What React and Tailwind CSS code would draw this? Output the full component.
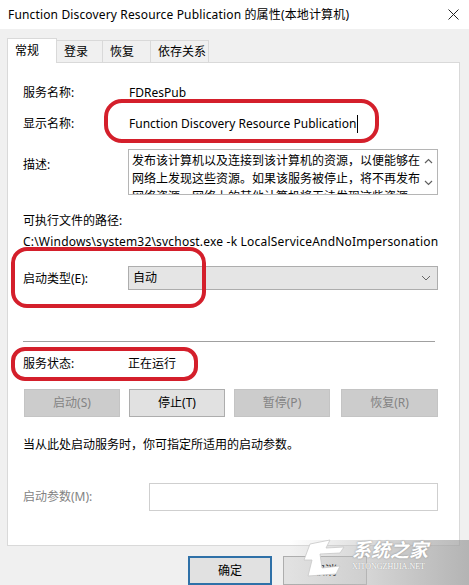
import React from "react";

const font = "font-['Noto_Sans','Noto_Sans_CJK_SC',sans-serif]";

function Label({ children, muted }) {
  return (
    <div className={`w-[105px] shrink-0 leading-[17px] ${muted ? "text-[#838383]" : "text-black"}`}>
      {children}
    </div>
  );
}

function Btn({ children, disabled }) {
  return (
    <div
      className={`h-[28px] w-[97px] flex items-center justify-center border ${
        disabled
          ? "bg-[#cccccc] border-[#c4c4c4] text-[#838383]"
          : "bg-[#e1e1e1] border-[#adadad] text-black"
      }`}
    >
      {children}
    </div>
  );
}

function Chevron({ up }) {
  return (
    <svg width="9" height="6" viewBox="0 0 9 6">
      <path
        d={up ? "M1 5 L4.5 1.5 L8 5" : "M1 1 L4.5 4.5 L8 1"}
        fill="none"
        stroke="#606060"
        strokeWidth="1.2"
      />
    </svg>
  );
}

const tabs = [
  { name: "常规", w: "w-[50px]", active: true },
  { name: "登录", w: "w-[46px]" },
  { name: "恢复", w: "w-[48px]" },
  { name: "依存关系", w: "w-[58px]" },
];

export default function App() {
  return (
    <div className={`relative w-[469px] h-[585px] overflow-hidden bg-[#f0f0f0] text-[12px] ${font}`}>
      {/* title bar */}
      <div className="h-[29px] bg-white flex items-center justify-between pl-[8px] pr-[10px]">
        <span className="text-black tracking-[0.15px]">
          Function Discovery Resource Publication 的属性(本地计算机)
        </span>
        <svg width="11" height="11" viewBox="0 0 11 11">
          <path d="M0.5 0.5 L10.5 10.5 M10.5 0.5 L0.5 10.5" stroke="#222" strokeWidth="1" />
        </svg>
      </div>

      {/* tabs */}
      <div className="mt-[9px] ml-[7px] flex items-end h-[24px]">
        {tabs.map((t) => (
          <div
            key={t.name}
            className={`${t.w} flex items-center pl-[7px] border-t border-l border-r border-[#d9d9d9] ${
              t.active ? "h-[25px] bg-white relative z-10 -mb-px" : "h-[22px] bg-[#f0f0f0] border-l-0"
            }`}
          >
            {t.name}
          </div>
        ))}
      </div>

      {/* panel */}
      <div className="ml-[7px] w-[453px] h-[484px] bg-white border border-[#d9d9d9] pl-[15px] pr-[21px]">
        <div className="mt-[21px] h-[17px] flex items-center">
          <Label>服务名称:</Label>
          <span className="ml-[1px]">FDResPub</span>
        </div>
        <div className="mt-[14px] h-[17px] flex items-center">
          <Label>显示名称:</Label>
          <span className="ml-[1px] border-r border-black pr-[1px]">Function Discovery Resource Publication</span>
        </div>
        <div className="mt-[17px] flex items-start">
          <div className="pt-[7px]">
            <Label>描述:</Label>
          </div>
          <div className="relative w-[311px] h-[46px] border border-[#b5b5b5] overflow-hidden">
            <div className="pl-[3px] pt-[2px] leading-[18px] whitespace-nowrap">
              <div>发布该计算机以及连接到该计算机的资源，以便能够在</div>
              <div>网络上发现这些资源。如果该服务被停止，将不再发布</div>
              <div>网络资源。网络上的其他计算机将无法发现这些资源</div>
            </div>
            <div className="absolute right-0 top-0 bottom-0 w-[17px] bg-white flex flex-col items-center justify-between py-[8px]">
              <Chevron up />
              <Chevron />
            </div>
          </div>
        </div>
        <div className="mt-[17px] h-[17px] flex items-center">可执行文件的路径:</div>
        <div className="mt-[4px] h-[17px] flex items-center whitespace-nowrap tracking-[0.2px]">
          C:\Windows\system32\svchost.exe -k LocalServiceAndNoImpersonation
        </div>
        <div className="mt-[16px] flex items-center">
          <Label>启动类型(E):</Label>
          <div className="w-[311px] h-[24px] bg-[#e5e5e5] border border-[#adadad] flex items-center justify-between pl-[4px] pr-[6px]">
            <span>自动</span>
            <svg width="10" height="6" viewBox="0 0 10 6">
              <path d="M1 1 L5 5 L9 1" fill="none" stroke="#666" strokeWidth="1" />
            </svg>
          </div>
        </div>
        <div className="mt-[51px] h-px w-[412px] bg-[#a0a0a0]" />
        <div className="mt-[13px] h-[17px] flex items-center">
          <Label>服务状态:</Label>
          <span>正在运行</span>
        </div>
        <div className="mt-[17px] flex gap-[9px] ml-[1px]">
          <Btn disabled>启动(S)</Btn>
          <Btn>停止(T)</Btn>
          <Btn disabled>暂停(P)</Btn>
          <div className="ml-[2px]">
            <Btn disabled>恢复(R)</Btn>
          </div>
        </div>
        <div className="mt-[19px] h-[17px] flex items-center">当从此处启动服务时，你可指定所适用的启动参数。</div>
        <div className="mt-[30px] flex items-center">
          <div className="w-[126px] shrink-0 text-[#838383]">启动参数(M):</div>
          <div className="w-[290px] h-[28px] border border-[#cfcfcf] bg-white" />
        </div>
      </div>

      {/* dialog buttons */}
      <div className="mt-[10px] ml-[188px] flex gap-[11px]">
        <div className="w-[84px] h-[29px] border-2 border-[#2f71a8] bg-[#e1e1e1] flex items-center justify-center">
          确定
        </div>
        <div className="w-[84px] h-[29px] border border-[#adadad] bg-[#e1e1e1] flex items-center justify-center">
          取消
        </div>
      </div>

      {/* watermark */}
      <div className="absolute left-[290px] top-[540px] w-[179px] h-[45px] bg-gradient-to-r from-transparent via-[#bdbdbd]/60 to-[#9a9a9a]/70 pointer-events-none" />
      <div className="absolute left-[300px] top-[538px] pointer-events-none flex items-start">
        <svg width="52" height="40" viewBox="0 0 52 40">
          <path d="M10 6 L30 2 L26 10 L44 9 L40 15 L20 16 L22 30 L40 28 L36 36 L8 38 L12 22 L4 22 Z" fill="#ffffff" stroke="#c8c8c8" strokeWidth="0.8" />
        </svg>
        <div className="flex flex-col items-start">
          <span className="text-white text-[19px] leading-[24px] italic font-bold [text-shadow:0_0_2px_#8a8a8a]">系统之家</span>
          <span className="text-white text-[8px] leading-[10px] font-['Liberation_Serif',serif] [text-shadow:0_0_1px_#8a8a8a]">XITONGZHIJIA.NET</span>
        </div>
      </div>

      {/* red annotations */}
      <svg className="absolute inset-0 pointer-events-none" width="469" height="585" viewBox="0 0 469 585">
        <rect x="106" y="101" width="271" height="40" rx="16" fill="none" stroke="#d41f2b" strokeWidth="4" />
        <rect x="13" y="249" width="191" height="57" rx="14" fill="none" stroke="#d41f2b" strokeWidth="4" />
        <rect x="13" y="349" width="183" height="30" rx="12" fill="none" stroke="#d41f2b" strokeWidth="4" />
      </svg>
    </div>
  );
}
